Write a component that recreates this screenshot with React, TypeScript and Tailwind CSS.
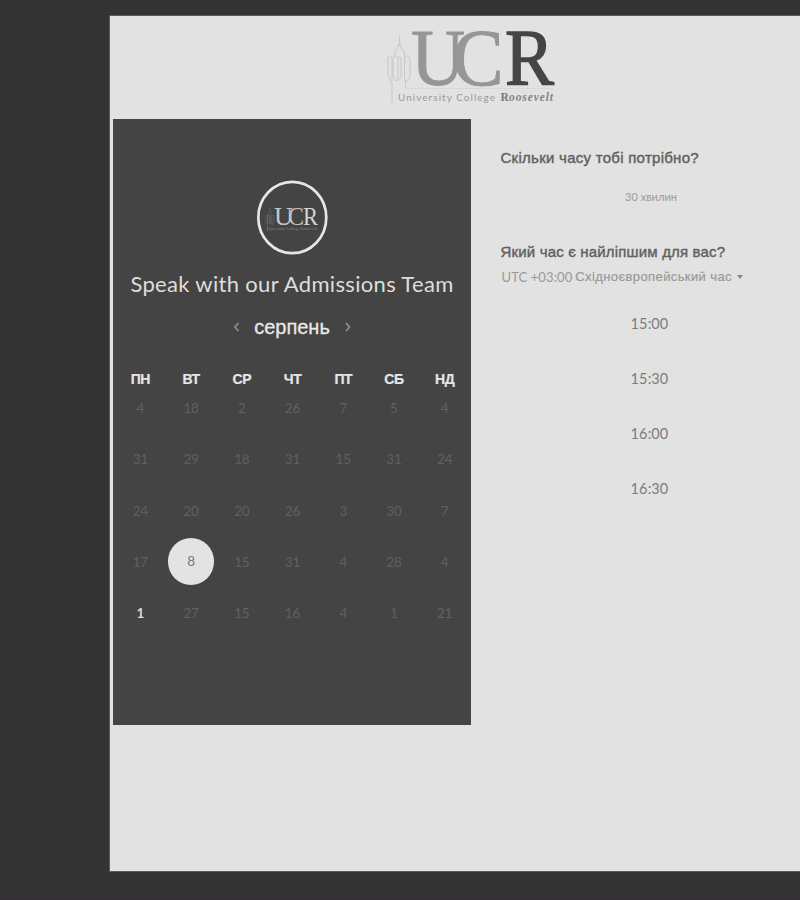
const weekdays = ['ПН', 'ВТ', 'СР', 'ЧТ', 'ПТ', 'СБ', 'НД'];
const weeks = [
  [4, 18, 2, 26, 7, 5, 4],
  [31, 29, 18, 31, 15, 31, 24],
  [24, 20, 20, 26, 3, 30, 7],
  [17, 8, 15, 31, 4, 28, 4],
  [1, 27, 15, 16, 4, 1, 21],
];
const slots = ['15:00', '15:30', '16:00', '16:30'];

function Tower() {
  return (
    <path
      d="M29.5 19v10M27.500 29h4M28.500 29c0 4-3.500 5-4 8v3M30.500 29c0 4 3.500 5 4 8v9h1.500M20 40c-2 0-2 2-2 4v16l4 7v20M20 40c2 0 2 1 2 3v22M25 40c-2 0-2 2-2 5v16l3 4 2-3V43c0-2-1-3-3-3M28 42c1-2 3-2 3 1v18l-3 4M37.500 40c2 0 2.500 2 2.500 4v17l-2 4h-3.500V46M35 42c0-1 1-2 2.500-2M35.500 65v7"
      fill="none"
    />
  );
}

function Logo() {
  return (
    <svg width="200" height="100" viewBox="0 0 200 100" overflow="visible" className="font-['Liberation_Serif',serif]">
      <g stroke="#c2c2c2" strokeWidth="0.8"><Tower /></g>
      <path d="M35 72.500h148" stroke="#d2d2d2" strokeWidth="0.7" />
      <text x="41" y="68.500" fontSize="80" textLength="54" lengthAdjust="spacingAndGlyphs" fill="#969696" stroke="#969696" strokeWidth="1">U</text>
      <text x="82.500" y="68.500" fontSize="80" textLength="51" lengthAdjust="spacingAndGlyphs" fill="#969696" stroke="#969696" strokeWidth="1">C</text>
      <text x="135" y="68.500" fontSize="80" textLength="49" lengthAdjust="spacingAndGlyphs" fill="#454545" stroke="#454545" strokeWidth="1.400">R</text>
      <text x="28" y="84.500" fontSize="10" textLength="97" className="font-[Lato,sans-serif]" fill="#999">University College</text>
      <text x="130.500" y="84.500" fontSize="11.500" fontWeight="bold" fill="#777">R</text>
      <text x="139" y="84.500" fontSize="11.500" fontStyle="italic" fontWeight="bold" textLength="44" fill="#858585">oosevelt</text>
    </svg>
  );
}

function Badge() {
  return (
    <svg width="72" height="76" viewBox="0 0 72 76" className="font-['Liberation_Serif',serif]">
      <ellipse cx="36.300" cy="37.500" rx="34" ry="35.700" fill="none" stroke="#e6e6e6" strokeWidth="2.700" />
      <g stroke="#777" strokeWidth="1.300" transform="translate(4 21) scale(.34 .35)"><Tower /></g>
      <text x="18" y="45" fontSize="26" textLength="19" lengthAdjust="spacingAndGlyphs" fill="#c4c4c4">U</text>
      <text x="32" y="45" fontSize="26" textLength="16" lengthAdjust="spacingAndGlyphs" fill="#c4c4c4">C</text>
      <text x="47" y="45" fontSize="26" textLength="15" lengthAdjust="spacingAndGlyphs" fill="#d4d4d4">R</text>
      <text x="11" y="50" fontSize="4" textLength="50" fill="#8a8a8a">University College Roosevelt</text>
    </svg>
  );
}

function Chevron({ d }: { d: string }) {
  return (
    <svg width="8" height="12" viewBox="0 0 8 12" fill="none" stroke="#8e8e8e" strokeWidth="1.700">
      <path d={d} />
    </svg>
  );
}

function Calendar() {
  return (
    <section className="h-[606px] w-[358px] shrink-0 bg-[#444444] pt-[61px]">
      <div className="flex justify-center"><Badge /></div>
      <h1 className="mt-[12px] text-center font-[Lato,sans-serif] text-[22px] leading-8 tracking-[0.33px] whitespace-nowrap text-[#dedede]">
        Speak with our Admissions Team
      </h1>
      <div className="mt-[11px] flex h-8 items-center justify-center gap-[14px]">
        <Chevron d="M6.500 2 3 6l3.500 4" />
        <span className="font-['Liberation_Sans',sans-serif] text-[20px] text-[#e8e8e8] [-webkit-text-stroke:0.3px_#e8e8e8]">серпень</span>
        <Chevron d="m2 2 3.500 4L2 10" />
      </div>
      <div className="mt-[25px] grid grid-cols-7 pl-[2px] pr-px text-center font-['Liberation_Sans',sans-serif] text-[14px] leading-[22px] font-bold tracking-[-0.5px] text-[#e6e6e6] [-webkit-text-stroke:0.2px_#e6e6e6]">
        {weekdays.map((name) => <span key={name}>{name}</span>)}
      </div>
      <div className="-mt-[7.500px] pr-px pl-[2px] font-[Lato,sans-serif] text-[13.5px] tracking-[-0.2px]">
        {weeks.map((week, row) => (
          <div key={row} className="grid h-[51.300px] grid-cols-7 place-items-center">
            {week.map((day, col) =>
              row === 3 && col === 1 ? (
                <span key={col} className="-mt-[2px] flex h-[47px] w-[46px] items-center justify-center rounded-full bg-[#e3e3e3] text-[#777777]">{day}</span>
              ) : (
                <span key={col} className={row === 4 && col === 0 ? 'font-bold text-[#dddddd]' : 'text-[#606060]'}>{day}</span>
              ),
            )}
          </div>
        ))}
      </div>
    </section>
  );
}

function TimePicker() {
  return (
    <section className="flex-1 pt-[29px] pl-[29.5px] whitespace-nowrap">
      <h2 className="font-['Liberation_Sans',sans-serif] text-[15px] leading-5 tracking-[0.27px] text-[#606060] [-webkit-text-stroke:0.4px_#606060]">Скільки часу тобі потрібно?</h2>
      <p className="mt-[19px] w-[301px] text-center font-[Lato,'Liberation_Sans',sans-serif] text-[11px] leading-5 text-[#9b9b9b]">30 хвилин</p>
      <h2 className="mt-[35px] font-['Liberation_Sans',sans-serif] text-[15px] leading-5 tracking-[0.17px] text-[#606060] [-webkit-text-stroke:0.4px_#606060]">Який час є найліпшим для вас?</h2>
      <div className="mt-[5px] flex items-center font-['Liberation_Sans',sans-serif] text-[13px] leading-5 tracking-[0.4px] text-[#999999]">
        <span className="mr-[3px] ml-px font-[Lato,sans-serif] text-[13px] tracking-[0.1px]">UTC +03:00</span>
        <span className="[-webkit-text-stroke:0.2px_#999999]">Східноєвропейський час</span>
        <svg className="ml-[5px]" width="6" height="4" viewBox="0 0 6 4"><path d="M0 0h6L3 4z" fill="#888888" /></svg>
      </div>
      <div className="mt-[9px] w-[298px] font-[Lato,sans-serif]">
        {slots.map((slot) => (
          <div key={slot} className="flex h-[55px] items-center justify-center text-[14.5px] tracking-[0.1px] text-[#7c7c7c]">{slot}</div>
        ))}
      </div>
    </section>
  );
}

export default function App() {
  return (
    <div className="h-[900px] w-[800px] overflow-hidden border-b-3 border-[#332e33] bg-[#343434] pt-4 pl-[110px]">
      <main className="h-[855px] w-[690px] bg-[#e2e2e2] outline outline-1 outline-[#5b5b5b]">
        <header className="h-[103px] pl-[260px]"><Logo /></header>
        <div className="flex pl-[3px]">
          <Calendar />
          <TimePicker />
        </div>
      </main>
    </div>
  );
}
